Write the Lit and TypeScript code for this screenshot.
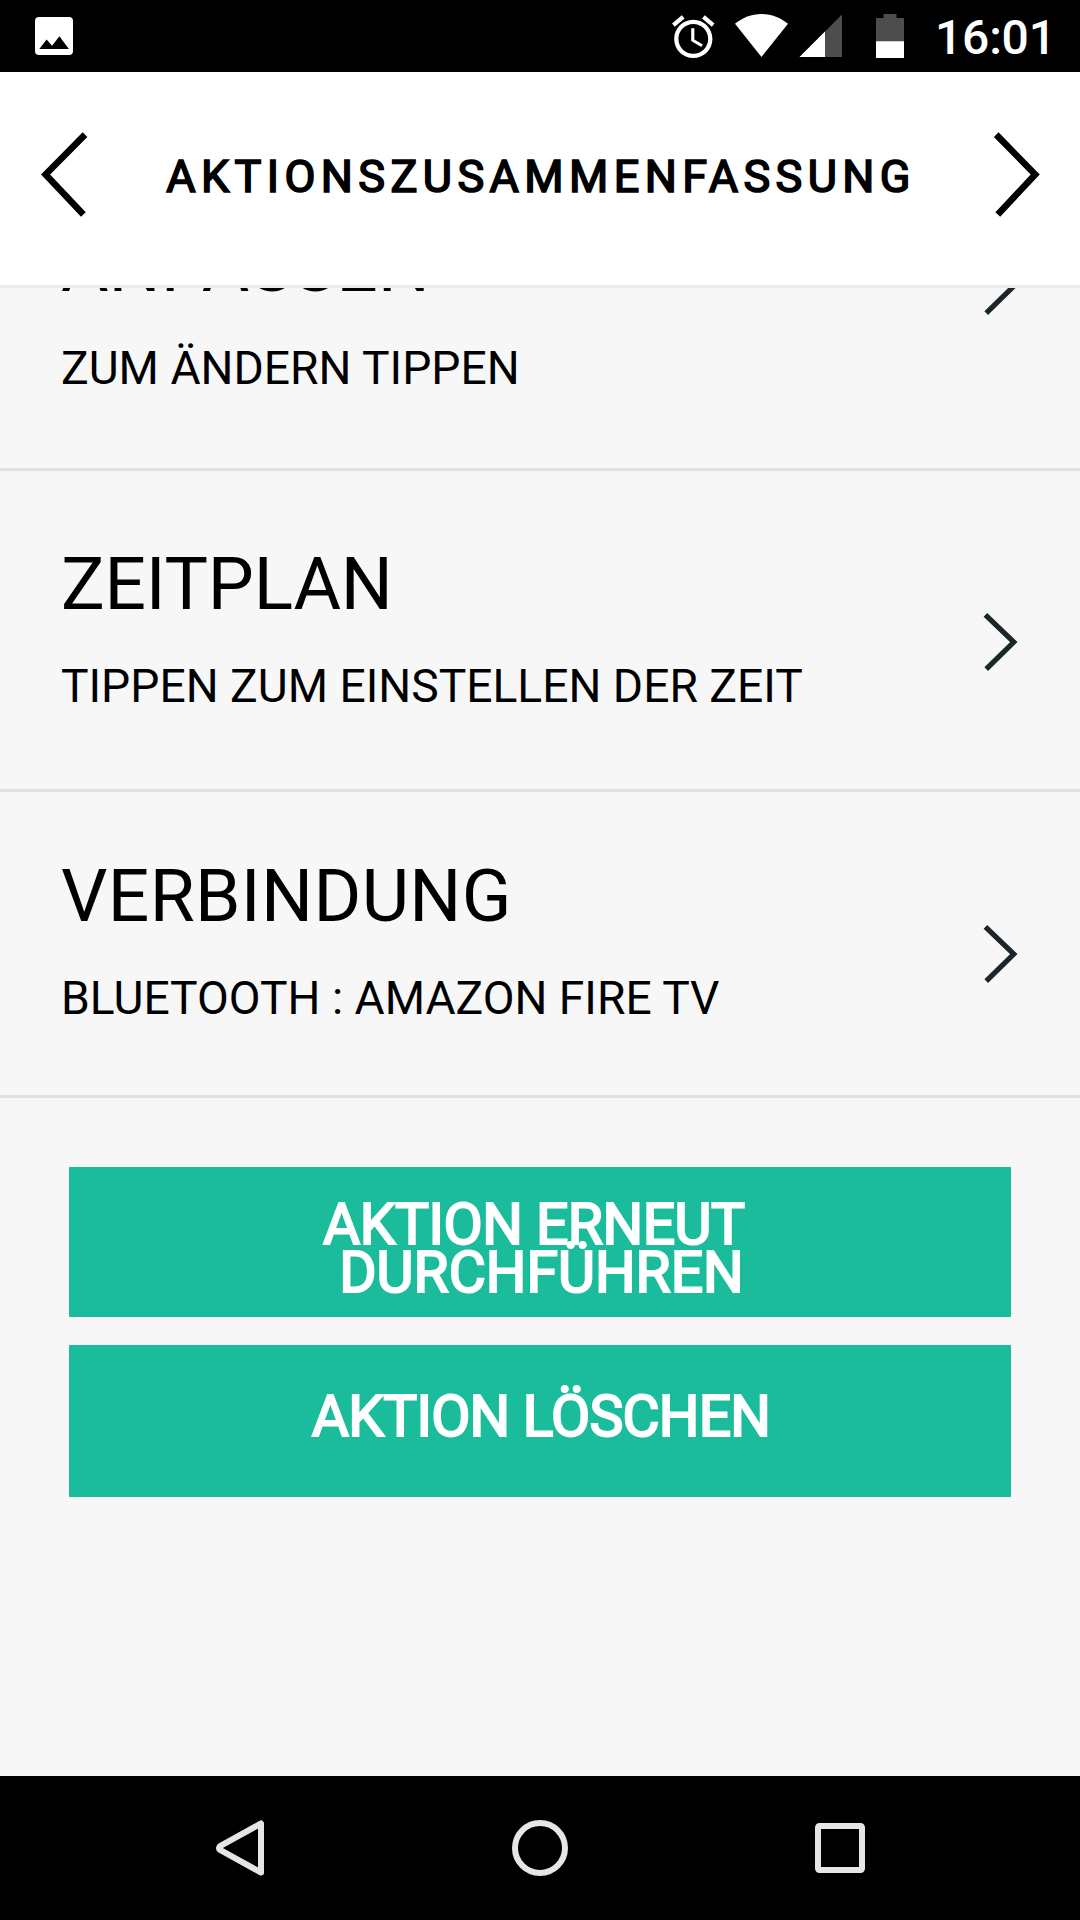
import { LitElement, html, css } from "lit";
import { customElement, property } from "lit/decorators.js";

@customElement("status-bar")
export class StatusBar extends LitElement {
  static styles = css`
    :host {
      display: flex;
      box-sizing: border-box;
      height: 72px;
      background: #000;
      color: #fff;
      font-family: Roboto, sans-serif;
      padding: 0 23px 0 28px;
      justify-content: space-between;
    }
    svg {
      display: block;
    }
    .right {
      display: flex;
    }
    .time {
      font-size: 48px;
      font-weight: 500;
      line-height: 56px;
      letter-spacing: -0.2px;
      padding-top: 10px;
      width: 122px;
      white-space: nowrap;
    }
  `;
  render() {
    return html`
      <svg width="52" height="72" viewBox="28 0 52 72">
        <path
          fill="#fff"
          fill-rule="evenodd"
          d="M39 17h30a4 4 0 0 1 4 4v30a4 4 0 0 1-4 4H39a4 4 0 0 1-4-4V21a4 4 0 0 1 4-4zM39.3 49h29.6L59.4 36.3l-7.4 9.4-5.4-6.3z"
        />
      </svg>
      <div class="right">
        <svg width="270" height="72" viewBox="665 0 270 72">
          <g transform="translate(667.8 11.3) scale(2.125)" fill="#fff">
            <path
              d="M22 5.72l-4.6-3.86-1.29 1.53 4.6 3.86L22 5.72zM7.88 3.39L6.6 1.86 2 5.71l1.29 1.53 4.59-3.85zM12.5 8H11v6l4.75 2.85.75-1.23-4-2.37V8zM12 4c-4.97 0-9 4.03-9 9s4.02 9 9 9c4.97 0 9-4.03 9-9s-4.03-9-9-9zm0 16c-3.87 0-7-3.13-7-7s3.13-7 7-7 7 3.13 7 7-3.13 7-7 7z"
            />
          </g>
          <path fill="#fff" d="M761.5 57L735 23.8C742.5 17.6 751.5 14 761.5 14S780.5 17.6 788 23.8z" />
          <path fill="#4d4d4d" d="M842 14.5V57H799.5z" />
          <path fill="#fff" d="M825 31.5V57H799.5z" />
          <path fill="#4d4d4d" d="M883.5 14h13v4h7.500v23.300H876V18h7.500z" />
          <path fill="#fff" d="M876 41.2h28V58H876z" />
        </svg>
        <div class="time">16:01</div>
      </div>
    `;
  }
}

@customElement("page-header")
export class PageHeader extends LitElement {
  static styles = css`
    :host {
      display: flex;
      box-sizing: border-box;
      height: 216px;
      background: #fff;
      border-bottom: 3px solid #ebebeb;
      justify-content: space-between;
      align-items: flex-start;
      padding: 55px 36px 0;
      font-family: Roboto, sans-serif;
    }
    svg {
      display: block;
    }
    .title {
      margin: 0;
      padding: 23px 0 0 2px;
      font-size: 45px;
      line-height: 54px;
      font-weight: 400;
      letter-spacing: 5.4px;
      color: #000;
      -webkit-text-stroke: 1.7px #000;
      white-space: nowrap;
    }
  `;
  render() {
    return html`
      <svg width="60" height="96" viewBox="36 127 60 96">
        <path d="M85 134.6L45.6 174.5 83.4 214.4" fill="none" stroke="#000" stroke-width="6.600" />
      </svg>
      <h1 class="title">AKTIONSZUSAMMENFASSUNG</h1>
      <svg width="60" height="96" viewBox="984 127 60 96">
        <path d="M996.2 134.6L1035.2 174.5 997.800 214.4" fill="none" stroke="#000" stroke-width="6.600" />
      </svg>
    `;
  }
}

@customElement("setting-row")
export class SettingRow extends LitElement {
  @property() heading = "";
  @property() detail = "";
  static styles = css`
    :host {
      display: flex;
      box-sizing: border-box;
      justify-content: space-between;
      align-items: flex-start;
      padding-left: 61px;
      padding-right: 60px;
      border-bottom: 3px solid #e0e0e0;
      font-family: Roboto, sans-serif;
      color: #000;
    }
    .text {
      display: flex;
      flex-direction: column;
      gap: 32px;
      white-space: nowrap;
    }
    .heading {
      font-size: 73px;
      line-height: 86px;
      letter-spacing: var(--heading-tracking, 0);
    }
    .detail {
      font-size: 46.2px;
      line-height: 54px;
      letter-spacing: var(--detail-tracking, 0);
    }
    .chevron {
      display: block;
      margin-top: var(--chevron-top, 71px);
    }
  `;
  render() {
    return html`
      <div class="text">
        <div class="heading">${this.heading}</div>
        <div class="detail">${this.detail}</div>
      </div>
      <svg class="chevron" width="37" height="60" viewBox="983 612 37 60">
        <path d="M985.4 614.8L1013.8 642.100 986.2 669.200" fill="none" stroke="#1b262b" stroke-width="5.200" />
      </svg>
    `;
  }
}

@customElement("nav-bar")
export class NavBar extends LitElement {
  static styles = css`
    :host {
      display: flex;
      box-sizing: border-box;
      height: 144px;
      background: #000;
      justify-content: space-between;
      align-items: center;
      padding: 0 210px;
    }
    svg {
      display: block;
      fill: none;
      stroke: #e6e6e6;
    }
  `;
  render() {
    return html`
      <svg width="60" height="60" viewBox="210 1818 60 60">
        <path d="M261 1823.5V1872.5L220.5 1850.2Q217.2 1848 220.5 1845.8z" stroke-width="6" stroke-linejoin="round" />
      </svg>
      <svg width="60" height="60" viewBox="510 1818 60 60">
        <circle cx="540" cy="1848" r="25" stroke-width="6" />
      </svg>
      <svg width="60" height="60" viewBox="810 1818 60 60">
        <rect x="818" y="1826" width="44" height="44" rx="1.5" stroke-width="6" />
      </svg>
    `;
  }
}

@customElement("app-root")
export class AppRoot extends LitElement {
  static styles = css`
    :host {
      display: flex;
      flex-direction: column;
      width: 1080px;
      height: 1920px;
      overflow: hidden;
      background: #f7f7f7;
      font-family: Roboto, sans-serif;
    }
    .content {
      flex: 1;
      min-height: 0;
      overflow: hidden;
    }
    .adjust {
      height: 248px;
      margin-top: -65px;
      --chevron-top: 33px;
    }
    .schedule {
      height: 321px;
      padding-top: 70px;
      --heading-tracking: -0.2px;
    }
    .connection {
      height: 306px;
      padding-top: 61px;
      --heading-tracking: 0.34px;
    }
    .actions {
      display: flex;
      flex-direction: column;
      gap: 28px;
      padding: 69px 69px 0;
    }
    .button {
      display: block;
      box-sizing: border-box;
      width: 100%;
      margin: 0;
      border: 0;
      background: #1bbc9b;
      color: #fff;
      -webkit-text-stroke: 2.1px #fff;
      font: 400 57px/48px Roboto, sans-serif;
      text-align: center;
      white-space: pre;
    }
    .line {
      display: block;
    }
    .repeat {
      height: 150px;
      padding: 13px 0 0;
    }
    .delete {
      height: 152px;
      padding: 0 0 8px 2px;
      letter-spacing: -0.77px;
    }
    .first {
      letter-spacing: -0.5px;
    }
    .second {
      padding-left: 3px;
    }
  `;
  render() {
    return html`
      <status-bar></status-bar>
      <page-header></page-header>
      <main class="content">
        <setting-row class="adjust" heading="ANPASSEN" detail="ZUM ÄNDERN TIPPEN"></setting-row>
        <setting-row class="schedule" heading="ZEITPLAN" detail="TIPPEN ZUM EINSTELLEN DER ZEIT"></setting-row>
        <setting-row class="connection" heading="VERBINDUNG" detail="BLUETOOTH : AMAZON FIRE TV"></setting-row>
        <div class="actions">
          <button class="button repeat"><span class="line first">${"AKTION ERNEUT "}</span><span class="line second">DURCHFÜHREN</span></button>
          <button class="button delete">AKTION LÖSCHEN</button>
        </div>
      </main>
      <nav-bar></nav-bar>
    `;
  }
}
